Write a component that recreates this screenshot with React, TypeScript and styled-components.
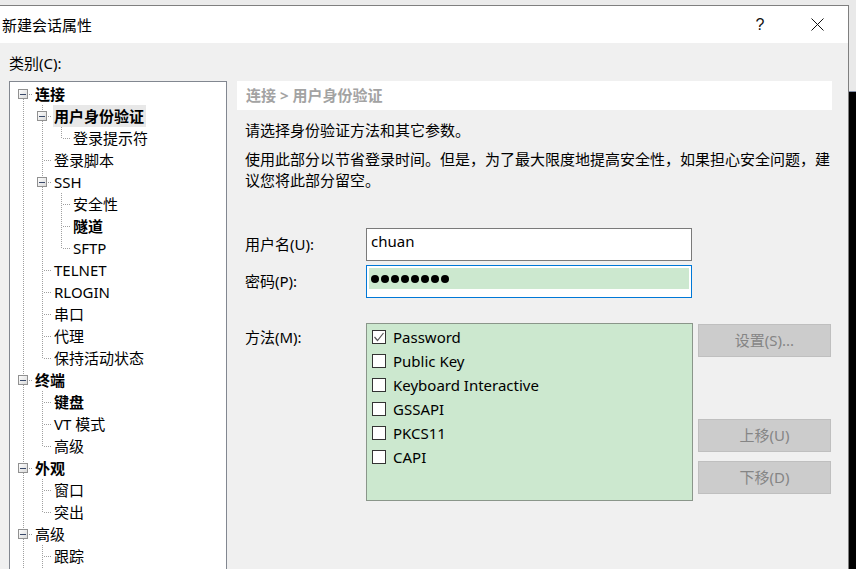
import React from "react";
import styled, { createGlobalStyle } from "styled-components";

const GlobalStyle = createGlobalStyle`
  html, body {
    margin: 0;
    padding: 0;
    overflow: hidden;
    background: #ebebeb;
    font-family: "Noto Sans", "Noto Sans CJK SC", sans-serif;
    font-size: 15px;
    color: #000;
  }
  * { box-sizing: border-box; }
`;

const Shell = styled.div`
  display: flex;
  height: 100vh;
`;

const Dialog = styled.div`
  width: 849px;
  margin-top: 5px;
  border-top: 1px solid #7f7f7f;
  border-right: 1px solid #7f7f7f;
  display: flex;
  flex-direction: column;
  background: #f0f0f0;
  min-height: 0;
`;

const SideStrip = styled.div`
  flex: 1;
  display: flex;
  flex-direction: column;
`;

const SideTop = styled.div`
  height: 92px;
  background: #e9e9e9;
  border-bottom: 1px solid #8590a8;
`;

const SideDark = styled.div`
  flex: 1;
  background: #000;
`;

const TitleBar = styled.div`
  height: 37px;
  background: #fff;
  display: flex;
  align-items: center;
  padding-left: 2px;
  flex-shrink: 0;
`;

const Title = styled.div`
  flex: 1;
  font-size: 15px;
  line-height: 20px;
`;

const TitleHelp = styled.div`
  width: 20px;
  text-align: center;
  font-size: 16px;
  font-weight: 300;
  color: #111;
  margin-right: 40px;
  font-family: "Liberation Sans", sans-serif;
`;

const TitleClose = styled.div`
  width: 14px;
  height: 14px;
  margin-right: 24px;
  display: flex;
  align-items: center;
  justify-content: center;
`;

const Body = styled.div`
  flex: 1;
  display: flex;
  flex-direction: column;
  padding-left: 9px;
  min-height: 0;
`;

const CategoryLabel = styled.div`
  margin-top: 10px;
  line-height: 20px;
  height: 20px;
`;

const Columns = styled.div`
  margin-top: 8px;
  flex: 1;
  display: flex;
  gap: 10px;
  min-height: 0;
`;

const TreePanel = styled.div`
  width: 218px;
  background: #fff;
  border: 1px solid #828790;
  border-bottom: none;
  overflow: hidden;
  padding: 1px 0 0 4px;
`;

const TreeRow = styled.div`
  display: flex;
  align-items: center;
  height: 22px;
`;

const TreeLabel = styled.span<{ $bold?: boolean; $selected?: boolean }>`
  margin-left: 1px;
  padding: 0 2px 0 1px;
  height: 22px;
  line-height: 22px;
  white-space: nowrap;
  font-weight: ${(p) => (p.$bold ? 700 : 400)};
  background: ${(p) => (p.$selected ? "#e8e8e8" : "transparent")};
`;

const RightCol = styled.div`
  width: 595px;
  display: flex;
  flex-direction: column;
`;

const Header = styled.div`
  height: 29px;
  line-height: 29px;
  background: #fff;
  padding-left: 9px;
  color: #a3a3a3;
  font-weight: 700;
`;

const Para = styled.p<{ $top: number }>`
  margin: ${(p) => p.$top}px 0 0 0;
  padding-left: 8px;
  line-height: 21px;
  width: 600px;
`;

const FormRow = styled.div<{ $top: number }>`
  display: flex;
  align-items: center;
  margin-top: ${(p) => p.$top}px;
`;

const MethodRow = styled.div`
  display: flex;
  align-items: flex-start;
  margin-top: 25px;
`;

const FieldLabel = styled.div<{ $offset?: number }>`
  width: 129px;
  padding-left: 8px;
  line-height: 21px;
  margin-top: ${(p) => p.$offset ?? 0}px;
`;

const TextBox = styled.div<{ $focused?: boolean }>`
  width: 326px;
  height: 33px;
  background: #fff;
  border: 1px solid ${(p) => (p.$focused ? "#0078d7" : "#7a7a7a")};
  padding: 2px;
  display: flex;
  flex-direction: column;
`;

const TextValue = styled.div`
  padding-left: 2px;
  line-height: 21px;
  font-size: 15px;
`;

const Highlight = styled.div`
  height: 21px;
  background: #cce8cf;
  display: flex;
  align-items: center;
  gap: 2px;
  padding-left: 2px;
`;

const Dot = styled.span`
  width: 8px;
  height: 8px;
  border-radius: 50%;
  background: #000;
`;

const ListBox = styled.div`
  width: 327px;
  height: 178px;
  background: #cce8cf;
  border: 1px solid #8a968a;
  padding: 1px 0 0 5px;
`;

const ListItem = styled.div`
  display: flex;
  align-items: center;
  height: 24px;
`;

const CheckBox = styled.span`
  width: 14px;
  height: 14px;
  border: 1px solid #333;
  background: #fff;
  margin-right: 7px;
  display: flex;
  align-items: center;
  justify-content: center;
`;

const ItemText = styled.span`
  line-height: 24px;
  white-space: nowrap;
`;

const ButtonCol = styled.div`
  margin-left: 5px;
  display: flex;
  flex-direction: column;
  padding-top: 1px;
`;

const Button = styled.div<{ $top?: number }>`
  width: 133px;
  height: 33px;
  margin-top: ${(p) => p.$top ?? 0}px;
  background: #cccccc;
  border: 1px solid #bfbfbf;
  color: #858585;
  display: flex;
  align-items: center;
  justify-content: center;
  font-size: 15px;
  padding-bottom: 2px;
`;

type Node = {
  label: string;
  bold?: boolean;
  selected?: boolean;
  children?: Node[];
};

const tree: Node[] = [
  {
    label: "连接",
    bold: true,
    children: [
      {
        label: "用户身份验证",
        bold: true,
        selected: true,
        children: [{ label: "登录提示符" }],
      },
      { label: "登录脚本" },
      {
        label: "SSH",
        children: [{ label: "安全性" }, { label: "隧道", bold: true }, { label: "SFTP" }],
      },
      { label: "TELNET" },
      { label: "RLOGIN" },
      { label: "串口" },
      { label: "代理" },
      { label: "保持活动状态" },
    ],
  },
  {
    label: "终端",
    bold: true,
    children: [{ label: "键盘", bold: true }, { label: "VT 模式" }, { label: "高级" }],
  },
  {
    label: "外观",
    bold: true,
    children: [{ label: "窗口" }, { label: "突出" }],
  },
  {
    label: "高级",
    children: [{ label: "跟踪" }, { label: "响铃" }, { label: "日志记录" }],
  },
  {
    label: "文件传输",
    children: [{ label: "X/YMODEM" }, { label: "ZMODEM" }],
  },
];

type Flat = {
  node: Node;
  depth: number;
  lines: boolean[];
  hasNext: boolean;
  hasPrev: boolean;
  key: string;
};

function flatten(nodes: Node[], depth: number, lines: boolean[], prefix: string, out: Flat[]) {
  nodes.forEach((n, i) => {
    const hasNext = i < nodes.length - 1;
    const hasPrev = depth > 0 || i > 0;
    out.push({ node: n, depth, lines, hasNext, hasPrev, key: prefix + i });
    if (n.children) flatten(n.children, depth + 1, [...lines, hasNext], prefix + i + "-", out);
  });
  return out;
}

const rows = flatten(tree, 0, [], "", []);

const DOT = "#a0a0a0";

const LineCell: React.FC<{ on: boolean }> = ({ on }) => (
  <svg width="19" height="22" style={{ flexShrink: 0, display: "block" }}>
    {on && <line x1="9.5" y1="0" x2="9.5" y2="22" stroke={DOT} strokeDasharray="1 1" />}
  </svg>
);

const OwnCell: React.FC<{ top: boolean; bottom: boolean; box: boolean; id: string }> = ({
  top,
  bottom,
  box,
  id,
}) => (
  <svg width="19" height="22" style={{ flexShrink: 0, display: "block" }}>
    <defs>
      <linearGradient id={"g" + id} x1="0" y1="0" x2="1" y2="1">
        <stop offset="0" stopColor="#ffffff" />
        <stop offset="1" stopColor="#d8d8d8" />
      </linearGradient>
    </defs>
    {top && <line x1="9.5" y1="0" x2="9.5" y2="11" stroke={DOT} strokeDasharray="1 1" />}
    {bottom && <line x1="9.5" y1="12" x2="9.5" y2="22" stroke={DOT} strokeDasharray="1 1" />}
    <line x1="11" y1="11.5" x2="19" y2="11.5" stroke={DOT} strokeDasharray="1 1" />
    {box && (
      <>
        <rect x="4.5" y="6.5" width="9" height="9" fill={`url(#g${id})`} stroke="#919191" />
        <line x1="6" y1="11.5" x2="12" y2="11.5" stroke="#3a4a6a" />
      </>
    )}
  </svg>
);

const methods = ["Password", "Public Key", "Keyboard Interactive", "GSSAPI", "PKCS11", "CAPI"];

export default function App() {
  return (
    <>
      <GlobalStyle />
      <Shell>
        <Dialog>
          <TitleBar>
            <Title>新建会话属性</Title>
            <TitleHelp>?</TitleHelp>
            <TitleClose>
              <svg width="13" height="13" viewBox="0 0 13 13">
                <line x1="0.5" y1="0.5" x2="12.5" y2="12.5" stroke="#111" strokeWidth="1" />
                <line x1="12.5" y1="0.5" x2="0.5" y2="12.5" stroke="#111" strokeWidth="1" />
              </svg>
            </TitleClose>
          </TitleBar>
          <Body>
            <CategoryLabel>类别(C):</CategoryLabel>
            <Columns>
              <TreePanel>
                {rows.map((r) => (
                  <TreeRow key={r.key}>
                    {r.lines.map((on, i) => (
                      <LineCell key={i} on={on} />
                    ))}
                    <OwnCell
                      id={r.key}
                      top={r.hasPrev}
                      bottom={r.hasNext}
                      box={!!r.node.children}
                    />
                    <TreeLabel $bold={r.node.bold} $selected={r.node.selected}>
                      {r.node.label}
                    </TreeLabel>
                  </TreeRow>
                ))}
              </TreePanel>
              <RightCol>
                <Header>连接 &gt; 用户身份验证</Header>
                <Para $top={10}>请选择身份验证方法和其它参数。</Para>
                <Para $top={8}>
                  使用此部分以节省登录时间。但是，为了最大限度地提高安全性，如果担心安全问题，建
                  <br />
                  议您将此部分留空。
                </Para>
                <FormRow $top={37}>
                  <FieldLabel>用户名(U):</FieldLabel>
                  <TextBox>
                    <TextValue>chuan</TextValue>
                  </TextBox>
                </FormRow>
                <FormRow $top={4}>
                  <FieldLabel>密码(P):</FieldLabel>
                  <TextBox $focused>
                    <Highlight>
                      {Array.from({ length: 8 }).map((_, i) => (
                        <Dot key={i} />
                      ))}
                    </Highlight>
                  </TextBox>
                </FormRow>
                <MethodRow>
                  <FieldLabel $offset={4}>方法(M):</FieldLabel>
                  <ListBox>
                    {methods.map((m, i) => (
                      <ListItem key={m}>
                        <CheckBox>
                          {i === 0 && (
                            <svg width="12" height="12" viewBox="0 0 12 12">
                              <polyline
                                points="1.5,6 4.5,9.5 10.5,2"
                                fill="none"
                                stroke="#555"
                                strokeWidth="1.2"
                              />
                            </svg>
                          )}
                        </CheckBox>
                        <ItemText>{m}</ItemText>
                      </ListItem>
                    ))}
                  </ListBox>
                  <ButtonCol>
                    <Button>设置(S)...</Button>
                    <Button $top={62}>上移(U)</Button>
                    <Button $top={9}>下移(D)</Button>
                  </ButtonCol>
                </MethodRow>
              </RightCol>
            </Columns>
          </Body>
        </Dialog>
        <SideStrip>
          <SideTop />
          <SideDark />
        </SideStrip>
      </Shell>
    </>
  );
}
